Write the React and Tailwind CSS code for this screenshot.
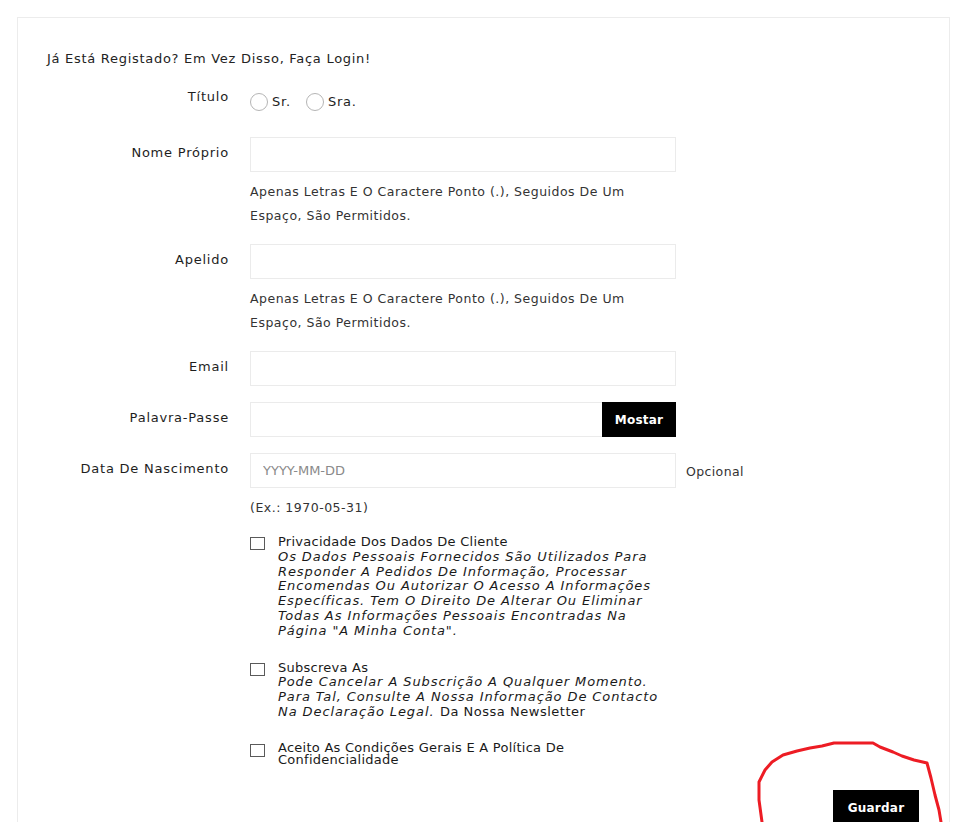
import React from "react"

const font = { fontFamily: "'DejaVu Sans', 'Liberation Sans', sans-serif" }

function Row({ label, children, help, extra }) {
  return (
    <div className="flex mb-4">
      <label className="w-[182px] shrink-0 text-right pt-[6px] leading-[20px] text-[13px] tracking-[0.06em] text-[#1e1e1e]">
        {label}
      </label>
      <div className="ml-[21px] w-[426px] shrink-0">
        {children}
        {help && (
          <p className="mt-2 text-[12.5px] leading-6 tracking-[0.04em] text-[#333]">{help}</p>
        )}
      </div>
      {extra && (
        <span className="ml-[10px] pt-[9px] leading-[20px] text-[12.5px] tracking-[0.03em] text-[#333]">{extra}</span>
      )}
    </div>
  )
}

function Input({ placeholder }) {
  return (
    <input
      placeholder={placeholder}
      className="block w-full h-[35px] border border-[#ebebeb] bg-white px-[12px] text-[13px] text-[#333] placeholder:text-[#8a8a8a] outline-none"
    />
  )
}

function Check({ children, tight }) {
  return (
    <div className="flex items-start">
      <span className="mt-[2px] w-[15px] h-[13px] shrink-0 border border-[#5a5a5a] bg-white" />
      <div className={`ml-[13px] w-[392px] text-[13px] tracking-[0.02em] text-[#1a1a1a] ${tight ? "leading-[12.5px]" : "leading-[14.8px]"}`}>
        {children}
      </div>
    </div>
  )
}

export default function App() {
  const help = "Apenas Letras E O Caractere Ponto (.), Seguidos De Um Espaço, São Permitidos."

  return (
    <div className="h-screen bg-white pt-[17px] pl-[17px] pr-[7px] relative overflow-hidden" style={font}>
      <div className="border border-[#ececec] min-h-[820px] pl-[29px] pr-[30px] pt-[30px] pb-10">
        <p className="text-[13px] leading-[22px] tracking-[0.055em] text-[#232323] mb-[11px]">
          Já Está Registado? Em Vez Disso, Faça Login!
        </p>

        {/* Título */}
        <div className="flex mb-4">
          <label className="w-[182px] shrink-0 text-right pt-[6px] leading-[20px] text-[13px] tracking-[0.06em] text-[#1e1e1e]">
            Título
          </label>
          <div className="ml-[21px] h-[40px] flex items-center gap-[15px] pt-[1px]">
            <span className="flex items-center gap-[4px]">
              <span className="w-[18px] h-[18px] rounded-full border border-[#b5b5b5]" />
              <span className="text-[13px] tracking-[0.06em] text-[#1e1e1e]">Sr.</span>
            </span>
            <span className="flex items-center gap-[4px]">
              <span className="w-[18px] h-[18px] rounded-full border border-[#b5b5b5]" />
              <span className="text-[13px] tracking-[0.06em] text-[#1e1e1e]">Sra.</span>
            </span>
          </div>
        </div>

        <Row label="Nome Próprio" help={help}>
          <Input />
        </Row>
        <Row label="Apelido" help={help}>
          <Input />
        </Row>
        <Row label="Email">
          <Input />
        </Row>
        <Row label="Palavra-Passe">
          <div className="flex h-[35px]">
            <input className="flex-1 min-w-0 border border-[#ebebeb] border-r-0 outline-none" />
            <button className="w-[74px] bg-black text-white text-[12px] font-bold tracking-[0.02em]">
              Mostar
            </button>
          </div>
        </Row>
        <Row label="Data De Nascimento" help="(Ex.: 1970-05-31)" extra="Opcional">
          <Input placeholder="YYYY-MM-DD" />
        </Row>

        <div className="ml-[203px] -mt-[1px] flex flex-col gap-[22px]">
          <Check>
            <div>Privacidade Dos Dados De Cliente</div>
            <div className="italic tracking-[0.07em]">
              Os Dados Pessoais Fornecidos São Utilizados Para Responder A Pedidos De Informação, Processar Encomendas Ou Autorizar O Acesso A Informações Específicas. Tem O Direito De Alterar Ou Eliminar Todas As Informações Pessoais Encontradas Na Página "A Minha Conta".
            </div>
          </Check>
          <Check>
            <div>Subscreva As</div>
            <div>
              <span className="italic tracking-[0.07em]">
                Pode Cancelar A Subscrição A Qualquer Momento. Para Tal, Consulte A Nossa Informação De Contacto Na Declaração Legal.
              </span>{" "}
              <span className="ml-[1px] tracking-[0.04em]">Da Nossa Newsletter</span>
            </div>
          </Check>
          <Check tight>
            Aceito As Condições Gerais E A Política De Confidencialidade
          </Check>
        </div>

        <div className="flex justify-end mt-[23px]">
          <button className="w-[86px] h-[36px] bg-black text-white text-[12px] font-bold tracking-[0.02em]">
            Guardar
          </button>
        </div>
      </div>

      {/* red annotation circle */}
      <svg className="absolute left-0 top-0 pointer-events-none" width="957" height="822" viewBox="0 0 957 822">
        <path
          d="M762 822 L759 800 L759 782 L765 770 L772 762 L783 755 L797 751 L810 748 L822 746 L834 743 L873 743 L880 747 L893 752 L902 756 L914 760 L927 763 L931 778 L935 795 L939 810 L941 822"
          fill="none"
          stroke="#ed1c24"
          strokeWidth="3"
          strokeLinejoin="round"
          strokeLinecap="round"
        />
      </svg>
    </div>
  )
}
